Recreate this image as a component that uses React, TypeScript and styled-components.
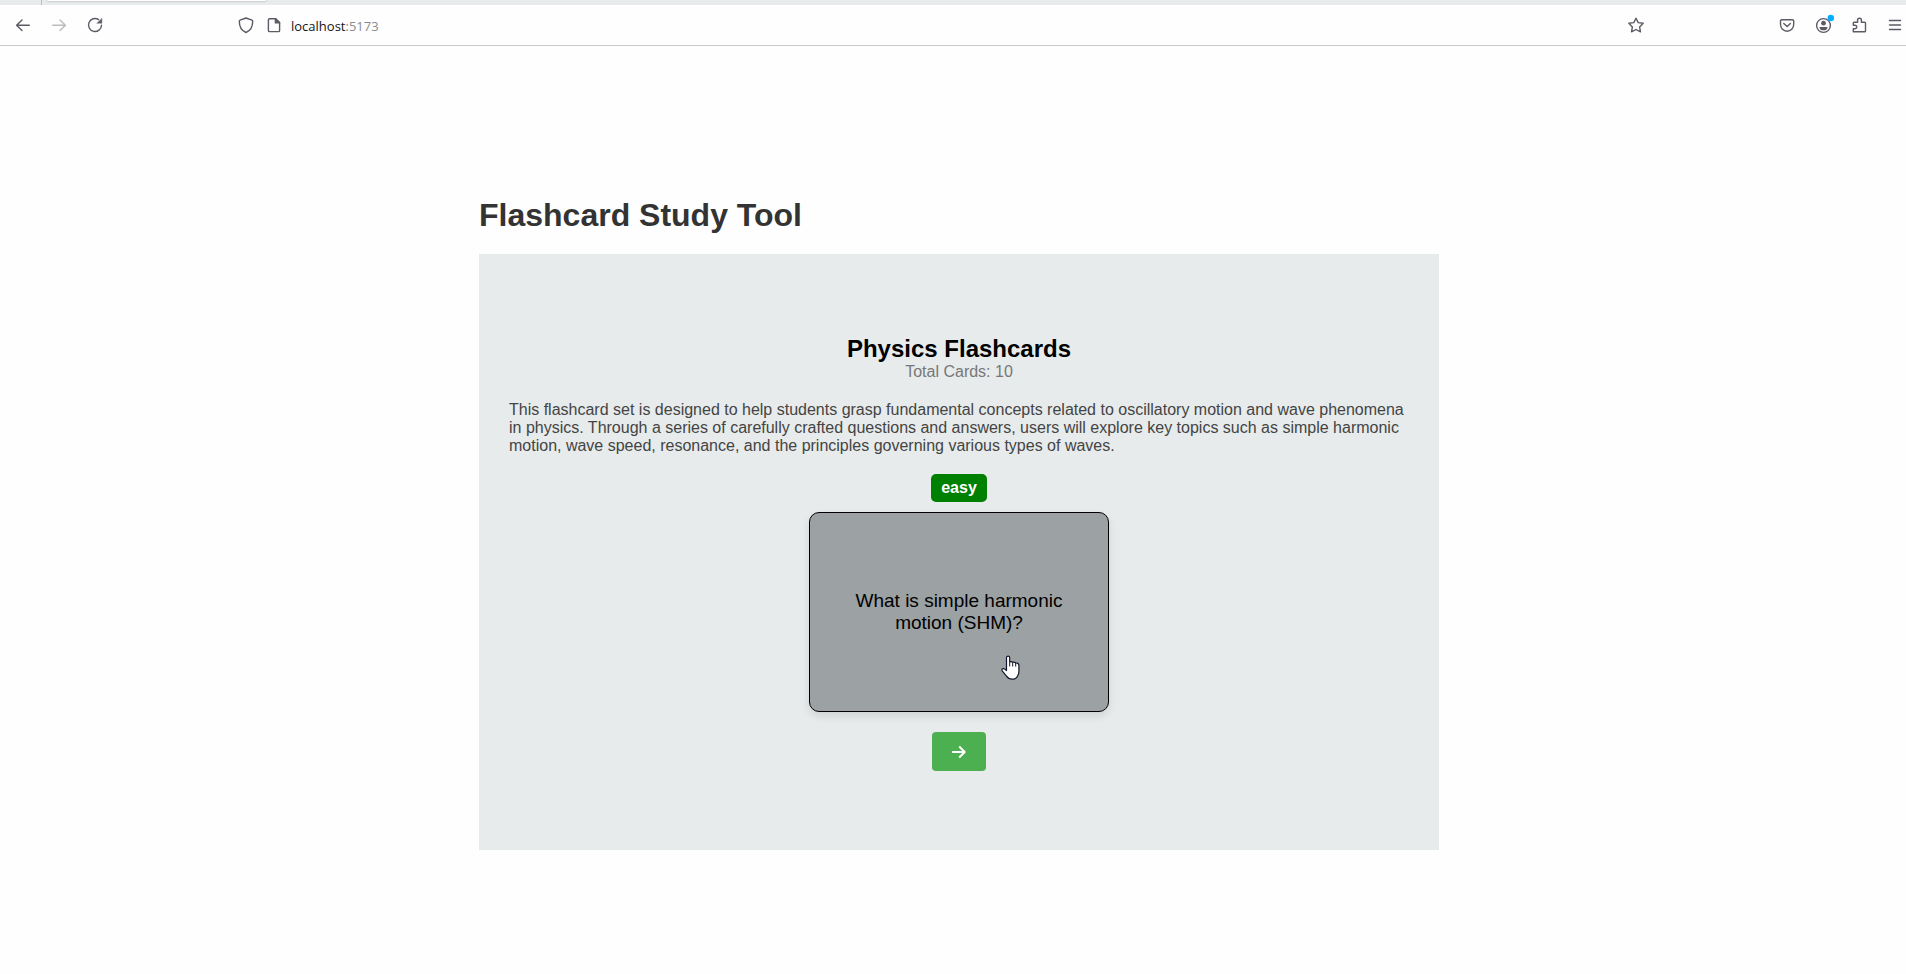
import React from "react";
import styled, { createGlobalStyle } from "styled-components";

const GlobalStyle = createGlobalStyle`
  * { box-sizing: border-box; }
  body {
    margin: 0;
    background: #fefefe;
    font-family: "Liberation Sans", Arial, sans-serif;
    font-size: 16px;
    color: #000;
  }
  h1, h2, p { margin: 0; }
  button { font-family: inherit; }
`;

const TabStrip = styled.div`
  display: flex;
  height: 5px;
  padding-left: 41px;
  background: #e7ebeb;
`;

const TabDivider = styled.div`
  width: 1px;
  margin-right: 5px;
  background: #babdbf;
`;

const ActiveTab = styled.div`
  width: 219px;
  height: 1px;
  background: #fff;
  border-radius: 0 0 4px 4px;
  box-shadow: 0 0 2px rgba(90, 95, 105, 0.8);
`;

const Toolbar = styled.nav`
  display: flex;
  align-items: center;
  height: 41px;
  padding-left: 12px;
  border-bottom: 1px solid #c9c9cc;
`;

const IconGroup = styled.div`
  display: flex;
  gap: 14px;
`;

const IconButton = styled.button<{ $faded?: boolean }>`
  display: flex;
  align-items: center;
  justify-content: center;
  flex: none;
  width: 22px;
  height: 22px;
  padding: 0;
  border: 0;
  background: none;
  color: ${(p) => (p.$faded ? "#bcbcc0" : "#5b5b66")};
`;

const AddressBar = styled.div`
  display: flex;
  flex: 1;
  align-items: center;
  gap: 6px;
  margin: 0 129px;
`;

const Address = styled.div`
  flex: 1;
  padding-top: 2px;
  font: 13px/18px "Open Sans", "Noto Sans", sans-serif;
  color: #15141a;
  outline: none;
`;

const Port = styled.span`
  color: #8b8b90;
`;

const Page = styled.main`
  box-sizing: content-box;
  max-width: 960px;
  margin: 0 auto;
  padding: 151px 0 120px 12px;
`;

const PageTitle = styled.h1`
  margin-bottom: 20px;
  font-size: 32px;
  line-height: 37px;
  color: #333;
`;

const Panel = styled.section`
  display: flex;
  flex-direction: column;
  align-items: center;
  padding: 81px 30px 79px;
  background: #e7ebeb;
`;

const SetTitle = styled.h2`
  font-size: 24px;
  line-height: 28px;
`;

const CardCount = styled.p`
  line-height: 18px;
  color: #777;
`;

const Description = styled.p`
  margin: 20px 0 19px;
  line-height: 18px;
  color: #444;
`;

const Difficulty = styled.span`
  padding: 5px 10px;
  border-radius: 5px;
  background: green;
  color: #fff;
  font-weight: bold;
  line-height: 18px;
`;

const Card = styled.button`
  position: relative;
  width: 300px;
  height: 200px;
  margin: 10px 0 20px;
  padding: 20px;
  border: 1px solid #000;
  border-radius: 10px;
  background: #9ca1a3;
  box-shadow: 0 4px 8px rgba(0, 0, 0, 0.1);
  color: #000;
  font-size: 19px;
  line-height: 22px;
  cursor: pointer;
`;

const Pointer = styled.svg`
  position: absolute;
  left: 191px;
  top: 142px;
`;

const NextButton = styled.button`
  display: flex;
  align-items: center;
  justify-content: center;
  width: 54px;
  height: 39px;
  padding: 0;
  border: 0;
  border-radius: 4px;
  background: #4caf50;
  color: #fff;
  cursor: pointer;
`;

type IconProps = { children: React.ReactNode };

const Icon = ({ children }: IconProps) => (
  <svg
    width="22"
    height="22"
    viewBox="0 0 22 22"
    fill="none"
    stroke="currentColor"
    strokeWidth="1.4"
    strokeLinecap="round"
    strokeLinejoin="round"
    aria-hidden="true"
  >
    {children}
  </svg>
);

export default function App() {
  return (
    <>
      <GlobalStyle />
      <header>
        <TabStrip>
          <TabDivider />
          <ActiveTab />
        </TabStrip>
        <Toolbar aria-label="Browser">
          <IconGroup>
            <IconButton aria-label="Back">
              <Icon><path d="M17.3 11.3H4.8M10 6 4.6 11.3 10 16.6" /></Icon>
            </IconButton>
            <IconButton aria-label="Forward" $faded>
              <Icon><path d="M4.7 11.3h12.5M12 6l5.4 5.3L12 16.6" /></Icon>
            </IconButton>
            <IconButton aria-label="Reload">
              <Icon>
                <path d="M14.6 5.6A6.5 6.5 0 1 0 17.5 11.2" />
                <path d="M17.9 4.4v4.9h-4.9z" fill="currentColor" strokeWidth="0.4" />
              </Icon>
            </IconButton>
          </IconGroup>
          <AddressBar>
            <IconButton aria-label="Tracking protection">
              <Icon>
                <path d="M11 4 16.9 6.2Q17.7 6.5 17.7 7.3C17.7 12.6 15.4 16.8 11 18.5 6.6 16.8 4.3 12.6 4.3 7.3Q4.3 6.5 5.1 6.2Z" />
              </Icon>
            </IconButton>
            <IconButton aria-label="Site information">
              <Icon>
                <path d="M6.6 4.7h6.2l3.8 3.8v7.9q0 1.2-1.2 1.2H6.6q-1.2 0-1.2-1.2V5.9q0-1.2 1.2-1.2z" />
                <path d="M12.4 4.7v4.2h4.2z" fill="currentColor" />
              </Icon>
            </IconButton>
            <Address
              role="textbox"
              aria-label="Address"
              contentEditable
              suppressContentEditableWarning
              spellCheck={false}
            >
              localhost<Port>:5173</Port>
            </Address>
            <IconButton aria-label="Bookmark this page">
              <Icon>
                <path d="M11 4.2 13.2 8.6 18.2 9.3 14.6 12.9 15.5 17.8 11 15.5 6.5 17.8 7.4 12.9 3.8 9.3 8.8 8.6Z" />
              </Icon>
            </IconButton>
          </AddressBar>
          <IconGroup>
            <IconButton aria-label="Save to Pocket">
              <Icon>
                <path d="M5.8 5.7h10.6q1.3 0 1.3 1.3v3.6a6.6 6.6 0 0 1-13.2 0V7q0-1.3 1.3-1.3z" />
                <path d="m7.8 9.5 3.3 3 3.3-3" />
              </Icon>
            </IconButton>
            <IconButton aria-label="Account">
              <Icon>
                <circle cx="11.5" cy="11.5" r="6.9" />
                <circle cx="11.5" cy="9.2" r="2.4" fill="currentColor" stroke="none" />
                <path d="M7.5 12.9h8q0 3.4-4 3.4t-4-3.400z" fill="currentColor" stroke="none" />
                <circle cx="18.800" cy="4" r="3.2" fill="#00adff" stroke="none" />
              </Icon>
            </IconButton>
            <IconButton aria-label="Extensions">
              <Icon>
                <path d="M5.3 17.8h11.3q.9 0 .9-.9V9.1q0-.9-.9-.9h-3.200V6.100a1.900 1.900 0 0 0-3.800 0v2.100H6.200q-.9 0-.9.9v2.100h1.600a1.700 1.700 0 0 1 0 3.600H5.300z" />
              </Icon>
            </IconButton>
            <IconButton aria-label="Menu">
              <Icon><path d="M5.5 6.5h11M5.5 11h11M5.5 15.5h11" /></Icon>
            </IconButton>
          </IconGroup>
        </Toolbar>
      </header>
      <Page>
        <PageTitle>Flashcard Study Tool</PageTitle>
        <Panel>
          <SetTitle>Physics Flashcards</SetTitle>
          <CardCount>Total Cards: 10</CardCount>
          <Description>
            This flashcard set is designed to help students grasp fundamental concepts related to
            oscillatory motion and wave phenomena in physics. Through a series of carefully crafted
            questions and answers, users will explore key topics such as simple harmonic motion,
            wave speed, resonance, and the principles governing various types of waves.
          </Description>
          <Difficulty>easy</Difficulty>
          <Card>
            What is simple harmonic motion (SHM)?
            <Pointer width="20" height="26" viewBox="0 0 20 26" aria-hidden="true">
              <path
                d="M5.5 15.500V2.800a1.600 1.600 0 0 1 3.200 0v4.200q1.600-.7 3 .3 1.600-.5 3 .5 2.800-.1 3.200 2.100v6.500c0 2-.6 3.200-1.300 4.500Q15 24.200 11.200 24.200 7.600 24.200 5.500 21.200L1.200 15.800C.3 14 2.200 13 3.500 13.900z"
                fill="#fff"
                stroke="#14142b"
                strokeWidth="1.2"
                strokeLinejoin="round"
              />
              <path d="M8.700 7v4.400M11.700 7.500v4M14.700 8v3.600" stroke="#14142b" strokeWidth="1" />
            </Pointer>
          </Card>
          <NextButton aria-label="Next card">
            <svg
              width="16"
              height="14"
              viewBox="0 0 16 14"
              fill="none"
              stroke="currentColor"
              strokeWidth="2"
              aria-hidden="true"
            >
              <path d="M1 7h12.500M8.200 1.500 13.700 7l-5.500 5.500" strokeLinejoin="round" />
            </svg>
          </NextButton>
        </Panel>
      </Page>
    </>
  );
}
